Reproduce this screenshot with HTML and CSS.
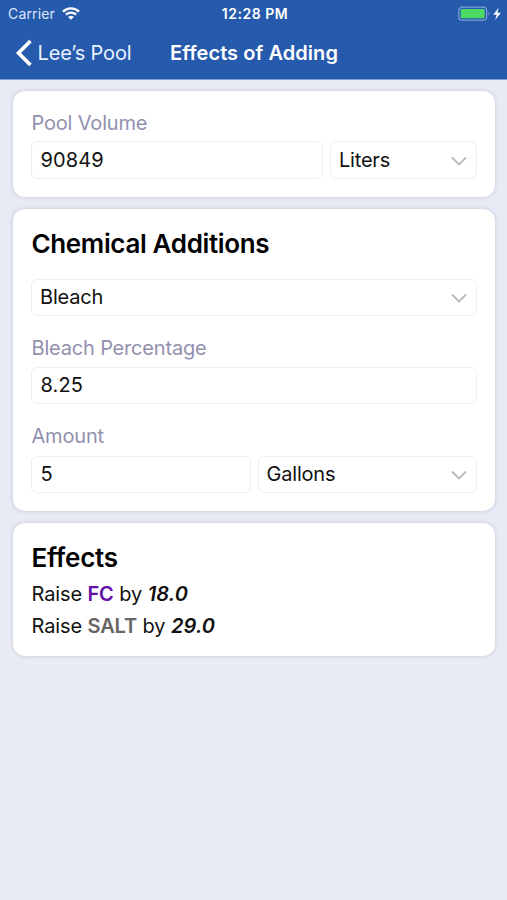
FILE: index.html
```html
<!DOCTYPE html>
<html lang="en">
<head>
<meta charset="utf-8">
<title>Effects of Adding</title>
<link rel="stylesheet" href="styles.css">
</head>
<body>
<header class="header">
  <div class="status">
    <div class="status-left"><span class="carrier">Carrier</span>
      <svg class="wifi" width="18" height="13" viewBox="0 0 18 13" fill="none" stroke="#fff" stroke-width="2.300"><path d="M1 4.600C5.500.2 12.500.2 17 4.600M3.900 7.700C6.800 4.900 11.200 4.900 14.100 7.700"/><path d="M9 12.700L6.200 9.900Q9 7.500 11.800 9.900Z" fill="#fff" stroke="none"/></svg>
    </div>
    <span class="time">12:28 PM</span>
    <svg class="battery" width="44" height="16" viewBox="0 0 44 16"><rect x=".7" y="1.200" width="28" height="13" rx="3.500" fill="none" stroke="#7da2d6" stroke-width="1.200"/><rect x="2.700" y="3.100" width="24" height="9.200" rx="1.500" fill="#4cd964"/><path d="M30.300 5.500Q32.200 7.700 30.300 10Z" fill="#7da2d6"/><path d="M40.500 1.800L35.300 8.700H38.600L37.200 14L42.900 6.800H39.400Z" fill="#fff"/></svg>
  </div>
  <nav class="nav">
    <a class="back"><svg width="17" height="28" viewBox="0 0 17 28" fill="none" stroke="#fff" stroke-width="3.600"><path d="M15.500 2L3.500 14L15.500 26"/></svg><span class="back-label">Lee’s Pool</span></a>
    <h1 class="title">Effects of Adding</h1>
  </nav>
</header>
<main class="cards">
  <section class="card volume">
    <div class="label">Pool Volume</div>
    <div class="row row-volume">
      <div class="field"><span class="number">90849</span></div>
      <div class="field"><span>Liters</span><svg class="chevron" width="16" height="10" viewBox="0 0 16 10"><path d="M1 1.500L8 8.500L15 1.500"/></svg></div>
    </div>
  </section>
  <section class="card additions">
    <h2 class="heading h-additions">Chemical Additions</h2>
    <div class="field"><span>Bleach</span><svg class="chevron" width="16" height="10" viewBox="0 0 16 10"><path d="M1 1.500L8 8.500L15 1.500"/></svg></div>
    <div class="label label-percent">Bleach Percentage</div>
    <div class="field"><span class="number">8.25</span></div>
    <div class="label label-amount">Amount</div>
    <div class="row row-amount">
      <div class="field"><span class="number">5</span></div>
      <div class="field"><span>Gallons</span><svg class="chevron" width="16" height="10" viewBox="0 0 16 10"><path d="M1 1.500L8 8.500L15 1.500"/></svg></div>
    </div>
  </section>
  <section class="card effects">
    <h2 class="heading h-effects">Effects</h2>
    <p class="effect">Raise <b class="fc">FC</b> by <em>18.0</em></p>
    <p class="effect">Raise <b class="salt">SALT</b> by <em>29.0</em></p>
  </section>
</main>
</body>
</html>
```
FILE: styles.css
```css
* { box-sizing: border-box; }
body {
  margin: 0;
  min-height: 900px;
  background: #e8eaf4;
  color: #111;
  font: 20px/24px Inter, "Liberation Sans", sans-serif;
  letter-spacing: -0.2px;
}
h1, h2, p { margin: 0; }
svg { display: block; flex: none; }

.header {
  height: 80px;
  background: #255aac;
  border-bottom: 1px solid #82a2d3;
  color: #fff;
}
.status {
  display: grid;
  grid-template-columns: 1fr auto 1fr;
  align-items: center;
  height: 27px;
  padding: 0 5px 0 8px;
  font-size: 14px;
}
.status-left { display: flex; align-items: center; gap: 7px; }
.carrier { color: #dce7f8; letter-spacing: 0.15px; }
.time { font-weight: 600; letter-spacing: 0.55px; }
.battery { justify-self: end; }
.nav { display: flex; align-items: center; height: 52px; padding-left: 15px; }
.back { display: flex; align-items: center; gap: 5px; width: 155px; color: #eaf1ff; }
.back-label { padding-left: 0.5px; letter-spacing: -0.15px; white-space: nowrap; }
.title { font-size: 20px; line-height: 24px; font-weight: 600; letter-spacing: 0.06px; white-space: nowrap; }

.cards { display: flex; flex-direction: column; gap: 12px; padding: 11px 12px 0 13px; }
.card {
  padding: 20px 18px 0;
  border-radius: 12px;
  background: #fff;
  box-shadow: 0 0 4px rgba(60, 60, 100, 0.2);
}
.volume { height: 106px; }
.additions { height: 302px; }
.effects { height: 133px; }
.label { height: 24px; margin-bottom: 6px; padding-left: 0.5px; color: #9290ae; letter-spacing: -0.18px; }
.label-percent { margin-top: 20px; margin-bottom: 7px; }
.label-amount { margin-top: 20px; margin-bottom: 8px; }
.heading { height: 30px; padding-left: 0.5px; font-size: 26px; line-height: 30px; font-weight: 600; letter-spacing: -0.36px; color: #000; }
.h-additions { margin-bottom: 20px; }
.h-effects { margin-bottom: 5px; letter-spacing: -0.25px; }
.row { display: grid; column-gap: 7px; }
.row-volume { grid-template-columns: 292px 1fr; }
.row-amount { grid-template-columns: 1fr 1fr; }
.field {
  display: flex;
  align-items: center;
  justify-content: space-between;
  height: 37px;
  padding: 0 9px 1px 8px;
  border: 1px solid #efeff1;
  border-radius: 6px;
}
.volume .field { height: 38px; }
.number { padding-left: 0.4px; letter-spacing: 0.15px; }
.chevron { margin-top: 2px; fill: none; stroke: #b9b9bc; stroke-width: 1.8; }
.volume .chevron { margin-top: 3px; }
.effect { height: 32px; padding-left: 0.5px; line-height: 32px; letter-spacing: -0.12px; }
.fc { font-weight: 600; color: #6210a8; }
.salt { font-weight: 600; color: #666; }
em { font-weight: 600; font-style: italic; letter-spacing: 0.15px; }
```
